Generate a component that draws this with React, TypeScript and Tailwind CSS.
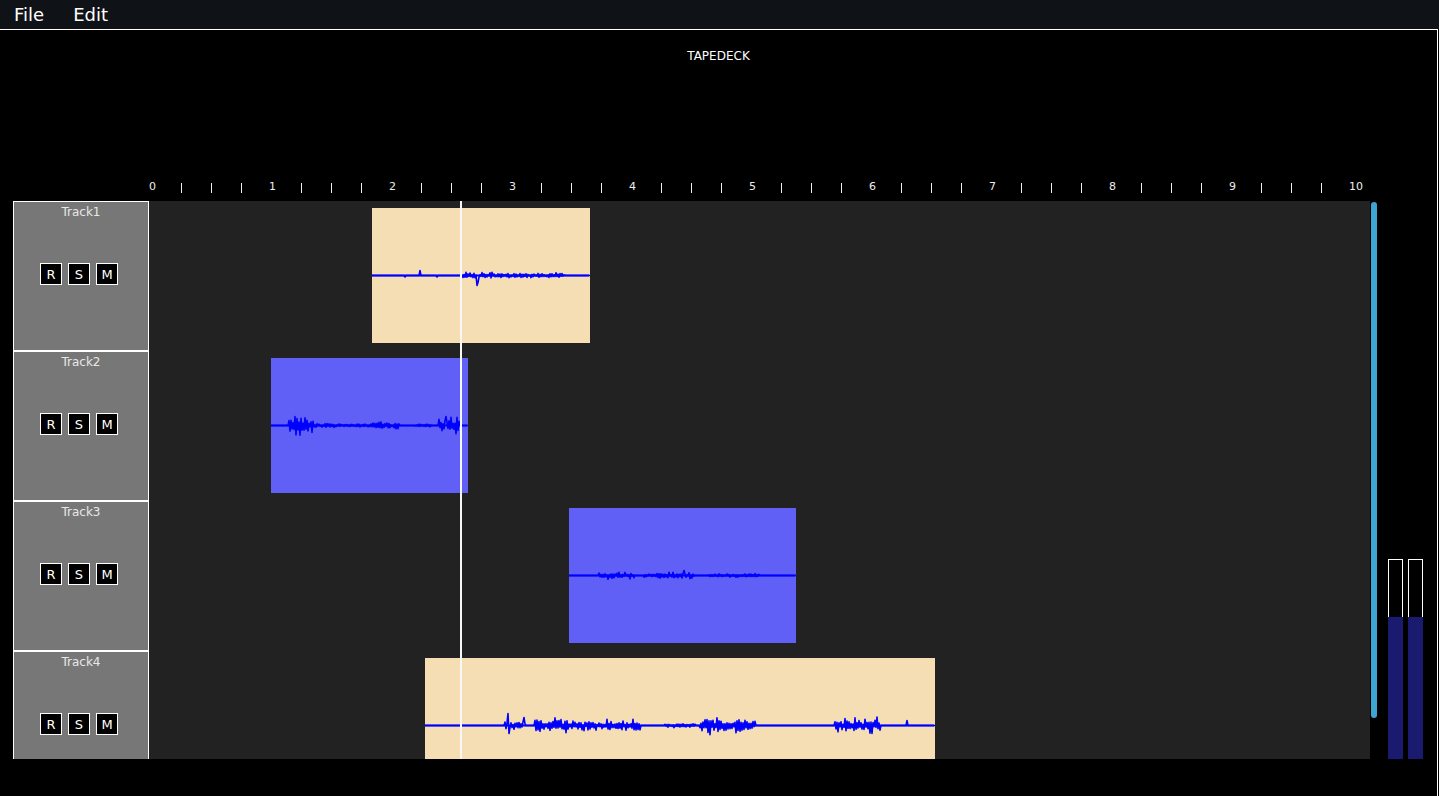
import React from "react";

type Burst = { s: number; e: number; a: number };
type Spike = { x: number; dy: number };

type Clip = {
  left: number;
  width: number;
  color: string;
  seed: number;
  bursts: Burst[];
  spikes: Spike[];
};

const tracks: { name: string; clip: Clip }[] = [
  {
    name: "Track1",
    clip: {
      left: 223,
      width: 218,
      color: "bg-[#f5deb3]",
      seed: 11,
      bursts: [
        { s: 90, e: 130, a: 3.5 },
        { s: 130, e: 192, a: 3 },
      ],
      spikes: [
        { x: 48, dy: -5 },
        { x: 105, dy: 10 },
        { x: 106, dy: 7 },
        { x: 33, dy: 1.5 },
        { x: 65, dy: 1.5 },
      ],
    },
  },
  {
    name: "Track2",
    clip: {
      left: 122,
      width: 197,
      color: "bg-[#6060f6]",
      seed: 23,
      bursts: [
        { s: 18, e: 42, a: 11 },
        { s: 42, e: 70, a: 2.5 },
        { s: 72, e: 100, a: 2 },
        { s: 100, e: 112, a: 6 },
        { s: 112, e: 128, a: 4 },
        { s: 145, e: 160, a: 2.5 },
        { s: 168, e: 188, a: 11 },
      ],
      spikes: [{ x: 175, dy: -9 }],
    },
  },
  {
    name: "Track3",
    clip: {
      left: 420,
      width: 227,
      color: "bg-[#6060f6]",
      seed: 37,
      bursts: [
        { s: 30, e: 65, a: 4 },
        { s: 75, e: 125, a: 3.5 },
        { s: 140, e: 190, a: 2.5 },
      ],
      spikes: [{ x: 115, dy: -5 }],
    },
  },
  {
    name: "Track4",
    clip: {
      left: 276,
      width: 510,
      color: "bg-[#f5deb3]",
      seed: 51,
      bursts: [
        { s: 80, e: 100, a: 6 },
        { s: 110, e: 150, a: 9 },
        { s: 150, e: 215, a: 7 },
        { s: 240, e: 270, a: 2.5 },
        { s: 275, e: 330, a: 10 },
        { s: 410, e: 455, a: 9 },
      ],
      spikes: [
        { x: 83, dy: -12 },
        { x: 84, dy: 8 },
        { x: 99, dy: -8 },
        { x: 482, dy: -5 },
      ],
    },
  },
];

function rng(seed: number) {
  let t = seed >>> 0;
  return () => {
    t += 0x6d2b79f5;
    let r = Math.imul(t ^ (t >>> 15), 1 | t);
    r ^= r + Math.imul(r ^ (r >>> 7), 61 | r);
    return ((r ^ (r >>> 14)) >>> 0) / 4294967296;
  };
}

function Waveform({ clip, height }: { clip: Clip; height: number }) {
  const rand = rng(clip.seed);
  const mid = height / 2;
  const pts: string[] = [];
  for (let x = 0; x <= clip.width; x += 1) {
    let amp = 0;
    for (const b of clip.bursts) {
      if (x >= b.s && x <= b.e) amp = Math.max(amp, b.a * (0.2 + rand() * 0.8));
    }
    let y = mid + (x % 2 === 0 ? -1 : 1) * amp * (0.4 + rand() * 0.6);
    for (const sp of clip.spikes) {
      if (Math.abs(sp.x - x) < 1) y = mid + sp.dy;
    }
    pts.push(`${x},${y.toFixed(1)}`);
  }
  return (
    <svg width={clip.width} height={height} className="absolute inset-0">
      <line x1={0} y1={mid} x2={clip.width - 1} y2={mid} stroke="#0000ff" strokeWidth={2.2} />
      <polyline points={pts.join(" ")} fill="none" stroke="#0000ff" strokeWidth={1.6} strokeLinejoin="round" />
    </svg>
  );
}

export default function App() {
  const ruler: string[] = [];
  for (let i = 0; i <= 10; i++) {
    ruler.push(String(i));
    if (i < 10) ruler.push("|", "|", "|");
  }

  return (
    <div className="h-screen w-full overflow-hidden bg-black text-white font-['DejaVu_Sans',sans-serif]">
      {/* Menu bar */}
      <div className="flex h-[29px] items-center gap-[29px] bg-[#0f1317] pl-[14px] text-[18px]">
        <span>File</span>
        <span>Edit</span>
      </div>

      <div className="w-[1438px] h-[767px] border-t border-r border-white">
        {/* Title */}
        <div className="h-[150px] pt-[19px] text-center text-[12px] leading-[14px]">TAPEDECK</div>

        {/* Ruler */}
        <div className="flex h-[21px] pl-[149px] text-[11px] leading-[13px] text-[#eeeeee]">
          {ruler.map((r, i) =>
            r === "|" ? (
              <span key={i} className="w-[30px] shrink-0 pt-[3px] pl-[2px]">
                <span className="block h-[10px] w-[1px] bg-[#eeeeee]" />
              </span>
            ) : (
              <span key={i} className="w-[30px] shrink-0">
                {r}
              </span>
            )
          )}
        </div>

        {/* Tracks */}
        <div className="flex h-[558px] pl-[13px]">
          <div className="relative h-full w-[1357px] overflow-hidden">
            {tracks.map((t) => (
              <div key={t.name} className="flex h-[150px]">
                <div className="flex w-[136px] shrink-0 flex-col border border-white bg-[#777777]">
                  <div className="pt-[3px] text-center text-[12px] leading-[14px] text-[#e8e8e8]">{t.name}</div>
                  <div className="mt-[44px] flex gap-[6px] pl-[26px]">
                    {["R", "S", "M"].map((b) => (
                      <div
                        key={b}
                        className="flex h-[22px] w-[22px] items-center justify-center border border-white bg-black text-[13px] leading-none"
                      >
                        {b}
                      </div>
                    ))}
                  </div>
                </div>
                <div className="relative flex-1 bg-[#222222]">
                  <div
                    className={`absolute top-[7px] h-[135px] ${t.clip.color}`}
                    style={{ left: t.clip.left, width: t.clip.width }}
                  >
                    <Waveform clip={t.clip} height={135} />
                  </div>
                </div>
              </div>
            ))}
            {/* Playhead */}
            <div className="absolute top-0 bottom-0 left-[447px] w-[2px] bg-[#f8f8f8]" />
          </div>

          {/* Scrollbar */}
          <div className="ml-[1px] mt-[1px] h-[516px] w-[6px] rounded-full bg-[#3fa4d2]" />

          {/* Level meters */}
          <div className="ml-[11px] flex h-full items-end gap-[5px]">
            {[0, 1].map((m) => (
              <div key={m} className="flex h-[200px] w-[15px] flex-col">
                <div className="h-[58px] border-t border-r border-l border-white" />
                <div className="flex-1 bg-[#1a1a6e]" />
              </div>
            ))}
          </div>
        </div>
      </div>
    </div>
  );
}
